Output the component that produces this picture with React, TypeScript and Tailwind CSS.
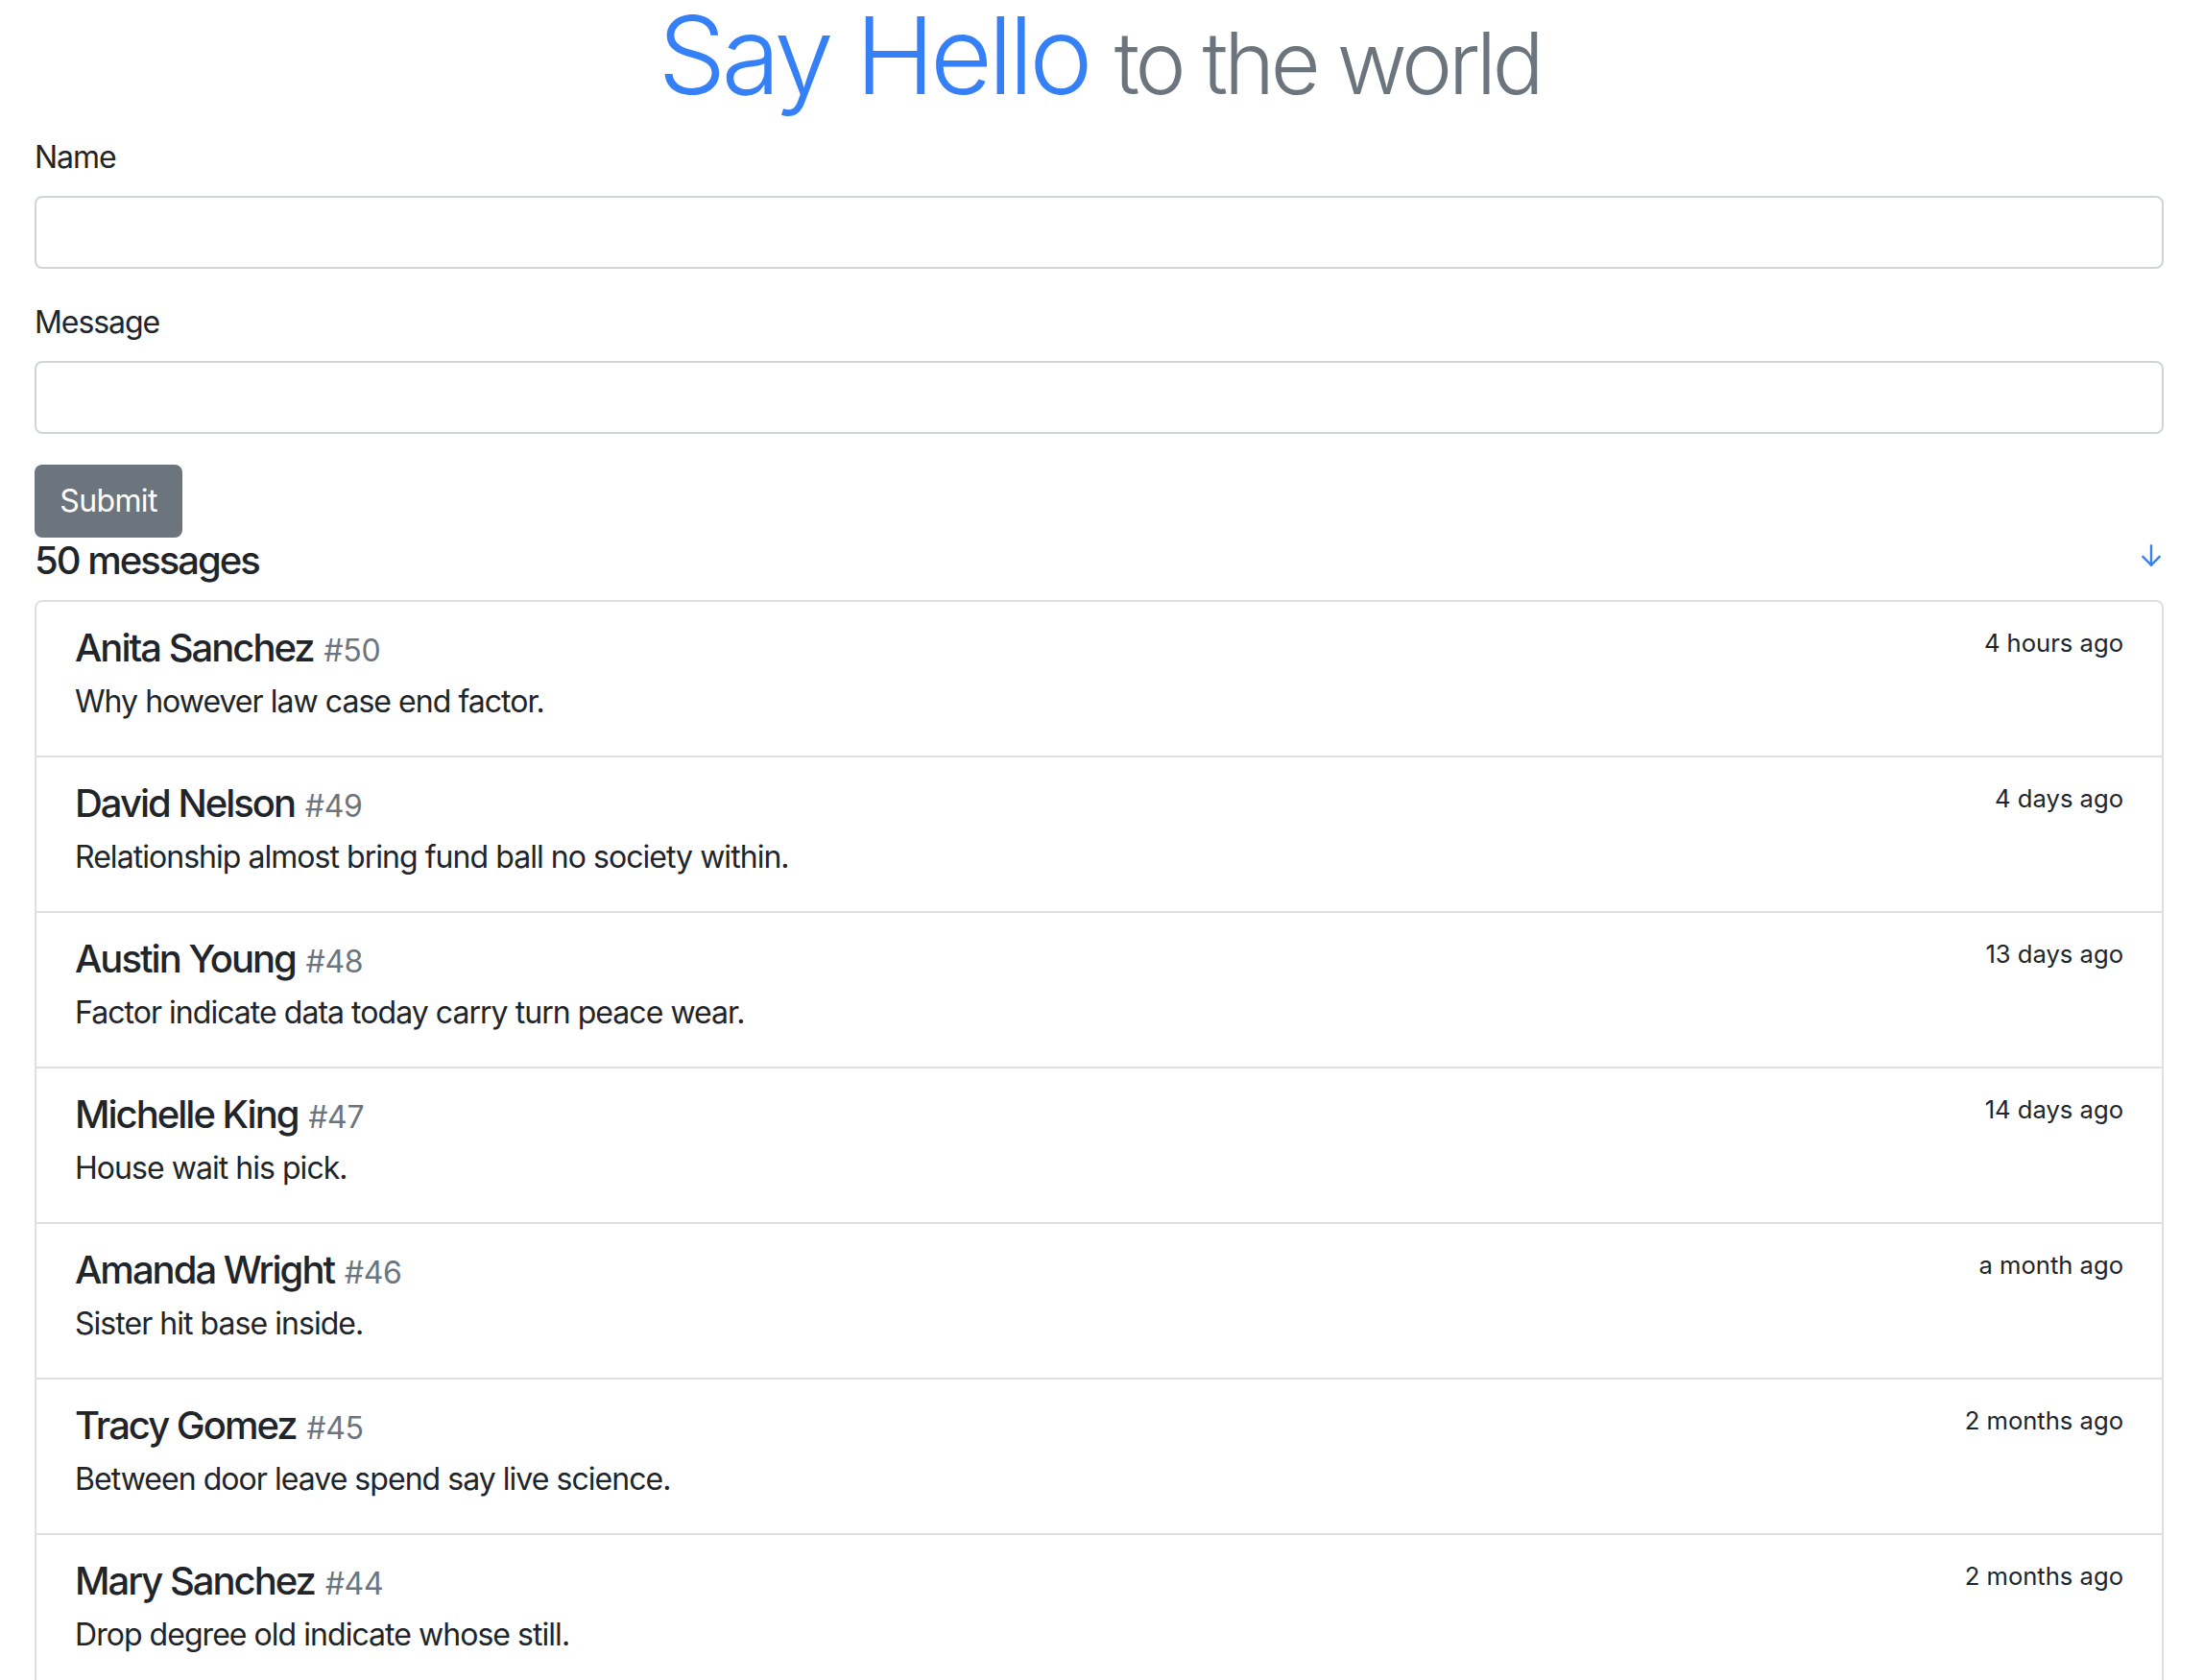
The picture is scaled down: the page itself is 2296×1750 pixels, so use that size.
type Message = {
  id: number;
  name: string;
  text: string;
  when: string;
};

const MESSAGES: Message[] = [
  { id: 50, name: "Anita Sanchez", text: "Why however law case end factor.", when: "4 hours ago" },
  { id: 49, name: "David Nelson", text: "Relationship almost bring fund ball no society within.", when: "4 days ago" },
  { id: 48, name: "Austin Young", text: "Factor indicate data today carry turn peace wear.", when: "13 days ago" },
  { id: 47, name: "Michelle King", text: "House wait his pick.", when: "14 days ago" },
  { id: 46, name: "Amanda Wright", text: "Sister hit base inside.", when: "a month ago" },
  { id: 45, name: "Tracy Gomez", text: "Between door leave spend say live science.", when: "2 months ago" },
  { id: 44, name: "Mary Sanchez", text: "Drop degree old indicate whose still.", when: "2 months ago" },
  { id: 43, name: "Kevin Moore", text: "Sort rate hope nothing.", when: "2 months ago" },
];

function ArrowDown() {
  return (
    <svg
      width="20"
      height="24"
      viewBox="0 0 20 24"
      fill="none"
      stroke="#3580f6"
      strokeWidth="2.4"
      strokeLinecap="square"
      className="mt-[7px] mr-[3px] shrink-0"
    >
      <path d="M10 1.5V21.5" />
      <path d="M1.5 13L10 21.5L18.5 13" strokeLinejoin="miter" />
    </svg>
  );
}

function Field({ label }: { label: string }) {
  return (
    <div className="mb-[32px]">
      <label className="block text-[32px] leading-[48px] tracking-[-0.033em] mb-[16px]">{label}</label>
      <input
        type="text"
        className="block w-full h-[76px] px-[24px] text-[32px] border-2 border-[#ced4da] rounded-[8px] bg-white outline-none"
      />
    </div>
  );
}

export default function App() {
  return (
    <div className="min-h-screen bg-white pl-[36px] pr-[42px] text-[#212529] font-['Inter','Noto_Sans',sans-serif]">
      <h1 className="text-center text-[112px] leading-[114px] font-[350] tracking-[-0.042em] text-[#3580f6] mb-[26px]">
        Say Hello{" "}
        <small className="text-[89.6px] leading-none tracking-[-0.046em] text-[#6c757d]">to the world</small>
      </h1>

      <form onSubmit={(e) => e.preventDefault()}>
        <Field label="Name" />
        <Field label="Message" />
        <button
          type="submit"
          className="block h-[76px] w-[154px] rounded-[8px] bg-[#6c757d] text-white text-[32px] leading-[48px] tracking-[-0.02em]"
        >
          Submit
        </button>
      </form>

      <div className="flex items-start justify-between h-[48px] mb-[17px]">
        <h5 className="text-[40px] leading-[48px] font-medium tracking-[-0.05em]">{MESSAGES[0].id} messages</h5>
        <ArrowDown />
      </div>

      <div className="border-2 border-[#dfdfdf] rounded-[8px]">
        {MESSAGES.map((m, i) => (
          <div
            key={m.id}
            className={
              i < MESSAGES.length - 1
                ? "px-[40px] py-[24px] border-b-2 border-[#dfdfdf]"
                : "px-[40px] py-[24px]"
            }
          >
            <div className="flex justify-between">
              <h5 className="text-[40px] leading-[48px] font-medium mb-[8px]">
                <span className="tracking-[-0.05em]">{m.name}</span>{" "}
                <small className="text-[32px] leading-none font-normal tracking-[-0.01em] text-[#6c757d]">#{m.id}</small>
              </h5>
              <small className="text-[25.6px] leading-[38.4px]">{m.when}</small>
            </div>
            <p className="text-[32px] leading-[48px] tracking-[-0.03em] mb-[8px]">{m.text}</p>
          </div>
        ))}
      </div>
    </div>
  );
}
